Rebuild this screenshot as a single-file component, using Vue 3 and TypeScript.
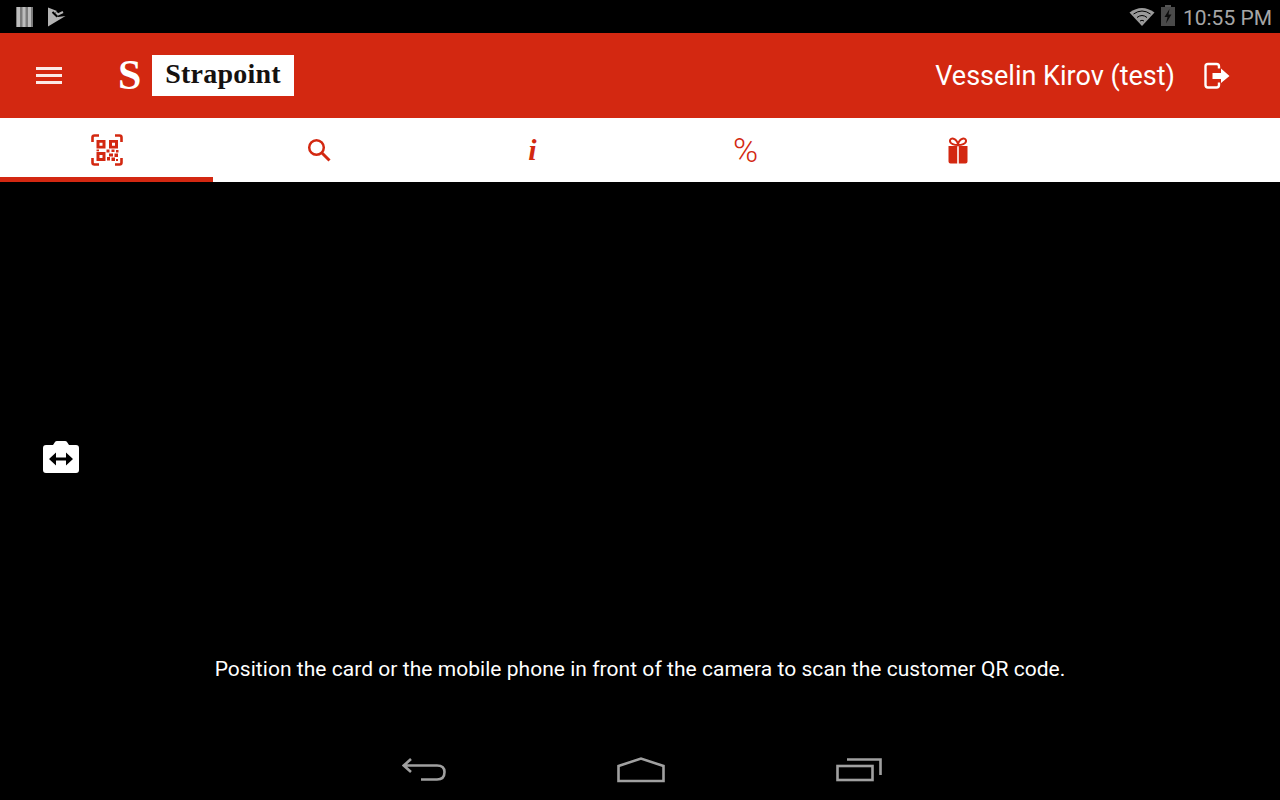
<script setup lang="ts">
const tabs = ['qr', 'search', 'info', 'percent', 'gift'];
const active = 'qr';
</script>

<template>
  <div class="screen">
    <div class="status-bar">
      <div class="status-left">
        <svg width="17" height="20" viewBox="0 0 17 20">
          <rect x="0" y="0" width="17" height="20" fill="#7c7c7c" />
          <rect x="1" y="0" width="3" height="20" fill="#bdbdbd" />
          <rect x="6.500" y="0" width="3" height="20" fill="#bdbdbd" />
          <rect x="12" y="0" width="3" height="20" fill="#bdbdbd" />
        </svg>
        <svg width="18" height="20" viewBox="0 0 18 20">
          <path d="M0 0.500 L9 4 L6 7 L10 10 L17.500 9 L0 19.500 Z" fill="#b4b4b4" />
          <path d="M4.500 5 L8.500 9 L14 1.500" fill="none" stroke="#000" stroke-width="2" />
          <path d="M8 5.500 L10 7.500 L15 5" fill="none" stroke="#b4b4b4" stroke-width="2" />
        </svg>
      </div>
      <div class="status-right">
        <svg width="26" height="20" viewBox="0 0 26 20" class="wifi">
          <path d="M0.500 6.500 Q13 -2.500 25.500 6.500 L13 20 Z" fill="#9a9a9a" />
          <path d="M4.500 8 Q13 2 21.500 8" fill="none" stroke="#000" stroke-width="1" />
          <path d="M8 11.500 Q13 7.500 18 11.500" fill="none" stroke="#000" stroke-width="1" />
          <path d="M11 15 Q13 13.500 15 15" fill="none" stroke="#000" stroke-width="1" />
        </svg>
        <svg width="14" height="21" viewBox="0 0 14 21" class="battery">
          <rect x="4" y="0" width="6" height="2" fill="#555" />
          <rect x="0" y="2" width="14" height="19" fill="#4a4a4a" />
          <path d="M8.500 4 L3.500 12 H6.500 L5 18.500 L10.500 9.500 H7.500 Z" fill="#0c0c0c" />
        </svg>
        <span class="clock">10:55 PM</span>
      </div>
    </div>

    <header class="app-bar">
      <button class="menu" aria-label="menu">
        <span></span><span></span><span></span>
      </button>
      <div class="logo">
        <span class="logo-s">S</span>
        <span class="logo-box">Strapoint</span>
      </div>
      <span class="user">Vesselin Kirov (test)</span>
      <svg class="logout" width="28" height="28" viewBox="0 0 28 28" fill="none">
        <path d="M16 6.500 V4.500 Q16 2 13.500 2 H5 Q2.500 2 2.500 4.500 V23 Q2.500 25.500 5 25.500 H13.500 Q16 25.500 16 23 V20.500" stroke="#fff" stroke-width="2.400" />
        <path d="M9.500 11 H18 V6.500 L26.500 14 L18 21 V17 H9.500 Z" fill="#fff" />
      </svg>
    </header>

    <nav class="tabs">
      <div v-for="t in tabs" :key="t" class="tab" :class="{ active: t === active }">
        <svg v-if="t === 'qr'" width="32" height="32" viewBox="0 0 32 32" fill="#d32811">
          <path d="M1.500 8 V3.500 Q1.500 1.500 3.500 1.500 H8 M24 1.500 H28.500 Q30.500 1.500 30.500 3.500 V8 M30.500 24 V28.500 Q30.500 30.500 28.500 30.500 H24 M8 30.500 H3.500 Q1.500 30.500 1.500 28.500 V24" fill="none" stroke="#d32811" stroke-width="2.600" />
          <path fill-rule="evenodd" d="M5.500 6 H14.500 V14.500 H5.500 Z M8.500 8.800 V11.700 H11.500 V8.800 Z" />
          <path fill-rule="evenodd" d="M18 6 H27 V14.500 H18 Z M21 8.800 V11.700 H24 V8.800 Z" />
          <path fill-rule="evenodd" d="M5.500 18 H14.500 V27 H5.500 Z M8.500 21 V24 H11.500 V21 Z" />
          <rect x="5.500" y="15.500" width="2.500" height="1.800" />
          <rect x="15.500" y="15.500" width="3" height="3" />
          <rect x="20.500" y="15.500" width="3" height="2.500" />
          <rect x="25" y="16" width="2.500" height="2.500" />
          <rect x="18" y="19.500" width="4" height="3" />
          <rect x="23.500" y="19.500" width="3.500" height="3.500" />
          <rect x="16" y="23" width="3" height="3.500" />
          <rect x="20.500" y="23.500" width="3.500" height="3.500" />
          <rect x="25" y="25" width="2" height="2" />
        </svg>
        <svg v-else-if="t === 'search'" class="shift-left" width="24" height="24" viewBox="0 0 24 24" fill="none" stroke="#d32811">
          <circle cx="9.500" cy="9.500" r="7.300" stroke-width="2.500" />
          <path d="M14.500 14.500 L22.500 22.500" stroke-width="3" />
        </svg>
        <span v-else-if="t === 'info'" class="glyph-i">i</span>
        <span v-else-if="t === 'percent'" class="glyph-pct">%</span>
        <svg v-else class="shift-left" width="20" height="27" viewBox="0 0 20 27" fill="#d32811">
          <path d="M0.500 9 H9.200 V26.500 H2.500 Q0.500 26.500 0.500 24.500 Z M10.800 9 H19.500 V24.500 Q19.500 26.500 17.500 26.500 H10.800 Z" />
          <path d="M10 8 C7 8 1.500 7 2 3.500 C2.500 0.500 8 0.500 10 7 C12 0.500 17.500 0.500 18 3.500 C18.500 7 13 8 10 8 Z" fill="none" stroke="#d32811" stroke-width="2" />
        </svg>
      </div>
    </nav>

    <main class="camera">
      <button class="flip" aria-label="switch camera">
        <svg width="36" height="32" viewBox="0 0 36 32">
          <path d="M3 4 H10 L12 1 Q12.500 0 14 0 H22 Q23.500 0 24 1 L26 4 H33 Q36 4 36 7 V29 Q36 32 33 32 H3 Q0 32 0 29 V7 Q0 4 3 4 Z" fill="#fff" />
          <path d="M6 18 L13 11.500 V16.500 H23 V11.500 L30 18 L23 24.500 V19.500 H13 V24.500 Z" fill="#000" />
        </svg>
      </button>
      <p class="hint">Position the card or the mobile phone in front of the camera to scan the customer QR code.</p>
    </main>

    <footer class="nav-bar">
      <svg width="44" height="24" viewBox="0 0 44 24" fill="none" stroke="#a0a0a0" stroke-width="2.600">
        <path d="M9 1 L1.800 7.500 L9 14 M2 7.500 H35 Q42.500 7.500 42.500 14 Q42.500 21.500 35 21.500 H19" />
      </svg>
      <svg width="48" height="26" viewBox="0 0 48 26" fill="none" stroke="#a0a0a0" stroke-width="2.600">
        <path d="M1.500 9 L24 1.500 L46.500 9 V24 H1.500 Z" />
      </svg>
      <svg width="46" height="24" viewBox="0 0 46 24" fill="none" stroke="#a0a0a0" stroke-width="2.600">
        <rect x="1.500" y="8" width="35" height="14" />
        <path d="M11 1.500 H44.500 V17" />
      </svg>
    </footer>
  </div>
</template>

<style>
html, body { background: #000; }
</style>

<style scoped>
.screen {
  width: 1280px;
  height: 800px;
  display: flex;
  flex-direction: column;
  overflow: hidden;
  background: #000;
  font-family: Roboto, "Liberation Sans", sans-serif;
}

.status-bar {
  height: 33px;
  flex: none;
  display: flex;
  align-items: center;
  justify-content: space-between;
  padding: 0 8px 0 16px;
}
.status-left { display: flex; align-items: center; gap: 15px; }
.status-right { display: flex; align-items: center; }
.wifi { margin-right: 6px; margin-top: -1px; }
.battery { margin-right: 8px; margin-top: -2px; }
.clock { color: #a6a6a6; font-size: 21px; line-height: 33px; padding-top: 4px; }

.app-bar {
  height: 85px;
  flex: none;
  display: flex;
  align-items: center;
  background: #d32811;
  padding-left: 36px;
  padding-right: 49px;
}
.menu {
  width: 26px;
  display: flex;
  flex-direction: column;
  gap: 4px;
  padding: 0;
  border: none;
  background: transparent;
}
.menu span { display: block; height: 3px; background: #fff; opacity: .9; }
.logo {
  display: flex;
  align-items: center;
  margin-left: 56px;
  font-family: "Liberation Serif", serif;
  font-weight: bold;
}
.logo-s { color: #fff; font-size: 42px; line-height: 41px; width: 34px; }
.logo-box {
  width: 142px;
  height: 41px;
  background: #fff;
  color: #15110f;
  font-size: 28px;
  line-height: 38px;
  text-align: center;
  letter-spacing: 0.2px;
}
.user { margin-left: auto; color: #fff; font-size: 27px; }
.logout { margin-left: 28px; }

.tabs {
  height: 64px;
  flex: none;
  display: flex;
  background: #fff;
}
.tab {
  width: 213px;
  box-sizing: border-box;
  display: flex;
  align-items: center;
  justify-content: center;
  padding-top: 5px;
  border-bottom: 5px solid transparent;
}
.tab.active { border-bottom-color: #d32811; }
.shift-left { margin-right: 2px; }
.glyph-i {
  color: #d32811;
  font-family: "Liberation Serif", serif;
  font-style: italic;
  font-weight: bold;
  font-size: 30px;
  line-height: 30px;
}
.glyph-pct {
  color: #d32811;
  font-size: 34px;
  line-height: 30px;
  font-weight: 300;
}

.camera {
  flex: 1;
  position: relative;
  display: flex;
  flex-direction: column;
  justify-content: flex-end;
}
.flip {
  position: absolute;
  left: 43px;
  top: 259px;
  padding: 0;
  border: none;
  background: transparent;
  line-height: 0;
}
.hint {
  margin: 0 0 71px;
  color: #fff;
  font-size: 21px;
  line-height: 24px;
  letter-spacing: 0.04px;
  text-align: center;
}

.nav-bar {
  height: 48px;
  flex: none;
  box-sizing: border-box;
  padding: 0 0 13px 3px;
  display: flex;
  align-items: center;
  justify-content: center;
  gap: 171px;
}
</style>
